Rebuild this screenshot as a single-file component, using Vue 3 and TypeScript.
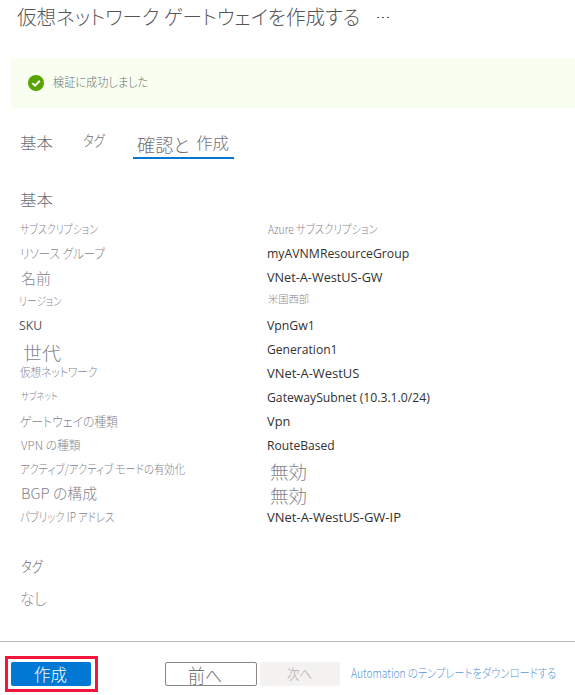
<script setup lang="ts">
import type { Directive } from 'vue'

interface Label {
  text: string
  width: number
  size: number
  dx?: number
  dy?: number
  latin?: boolean
}

interface Row {
  name: Label
  value: Label
}

// Stretches or condenses a label horizontally to its intended width.
const vFit: Directive<HTMLElement, Label> = {
  mounted(el, { value }) {
    const scale = value.width / el.offsetWidth
    el.style.transform = `translate(${value.dx ?? 0}px, ${value.dy ?? 0}px) scaleX(${scale})`
  },
}

const t = (text: string, width: number, size: number, dx = 0, dy = 0): Label => ({ text, width, size, dx, dy })
const en = (text: string, width: number, dx = -1): Label => ({ text, width, size: 12.8, dx, dy: -1, latin: true })

const title = t('仮想ネットワーク ゲートウェイを作成する', 343, 20, -1, -1)
const status = t('検証に成功しました', 95, 12, 0, -1)
const tabBasic = t('基本', 33, 16, 0, -1)
const tabTag = t('タグ', 22, 15, 0, -3)
const tabReview = t('確認と', 52, 18.5, 0, 1)
const tabCreate = t('作成', 33, 16, 0, -1)
const heading = t('基本', 33, 16, 0, -1)

const rows: Row[] = [
  { name: t('サブスクリプション', 78, 12, -1, -1), value: t('Azure サブスクリプション', 110, 12, 0, -1) },
  { name: t('リソース グループ', 85, 13, -1, -1), value: en('myAVNMResourceGroup', 142) },
  { name: t('名前', 30, 14.5, 0, 0), value: en('VNet-A-WestUS-GW', 116) },
  { name: t('リージョン', 43, 12, -2, -1), value: t('米国西部', 41, 10.5, 0, -3) },
  { name: en('SKU', 23, -2), value: en('VpnGw1', 48) },
  { name: t('世代', 38, 18.5, 2, 2), value: en('Generation1', 71) },
  { name: t('仮想ネットワーク', 77, 12, -1, -2), value: en('VNet-A-WestUS', 92) },
  { name: t('サブネット', 37, 10.5, 0, -2), value: en('GatewaySubnet (10.3.1.0/24)', 163) },
  { name: t('ゲートウェイの種類', 98, 13, -1, -1), value: en('Vpn', 23) },
  { name: t('VPN の種類', 60, 12, 0, -1), value: en('RouteBased', 68) },
  { name: t('アクティブ/アクティブ モードの有効化', 165, 12.5, -1, -1), value: t('無効', 37, 18.5, 2, 1) },
  { name: t('BGP の構成', 76, 14.5, 0, -1), value: t('無効', 37, 18.5, 2, 1) },
  { name: t('パブリック IP アドレス', 94, 12.5, -1, -1), value: en('VNet-A-WestUS-GW-IP', 134) },
]

const tagHeading = t('タグ', 22, 15)
const tagNone = t('なし', 26, 15.5, -1, 0)
const create = t('作成', 33, 17)
const previous = t('前へ', 34, 19, 0, 1)
const next = t('次へ', 25, 13.5, 0, -1)
const download = t('Automation のテンプレートをダウンロードする', 205, 12.5, 0, -1)
</script>

<template>
  <main class="page">
    <header class="title">
      <h1><span v-fit="title" class="label" :style="{ fontSize: title.size + 'px' }">{{ title.text }}</span></h1>
      <svg class="more" width="13" height="4" viewBox="0 0 13 4">
        <path d="M0 1h2v1H0zM5 1h2v1H5zM10 1h2v1h-2z" fill="#555" />
      </svg>
    </header>

    <section class="status">
      <svg width="16" height="16" viewBox="0 0 16 16">
        <circle cx="8" cy="8" r="8" fill="#57a300" />
        <path d="M4.3 8.1 7 10.7l4.8-5" fill="none" stroke="#fff" stroke-width="2" />
      </svg>
      <span v-fit="status" class="label" :style="{ fontSize: status.size + 'px' }">{{ status.text }}</span>
    </section>

    <nav class="tabs">
      <a class="tab basic"><span v-fit="tabBasic" class="label" :style="{ fontSize: tabBasic.size + 'px' }">{{ tabBasic.text }}</span></a>
      <a class="tab tag"><span v-fit="tabTag" class="label" :style="{ fontSize: tabTag.size + 'px' }">{{ tabTag.text }}</span></a>
      <a class="tab active">
        <span class="word"><span v-fit="tabReview" class="label" :style="{ fontSize: tabReview.size + 'px' }">{{ tabReview.text }}</span></span>
        <span class="word"><span v-fit="tabCreate" class="label" :style="{ fontSize: tabCreate.size + 'px' }">{{ tabCreate.text }}</span></span>
      </a>
    </nav>

    <h2><span v-fit="heading" class="label" :style="{ fontSize: heading.size + 'px' }">{{ heading.text }}</span></h2>

    <dl class="details">
      <template v-for="row in rows" :key="row.name.text">
        <dt><span v-fit="row.name" class="label" :class="{ latin: row.name.latin }" :style="{ fontSize: row.name.size + 'px' }">{{ row.name.text }}</span></dt>
        <dd><span v-fit="row.value" class="label" :class="{ latin: row.value.latin }" :style="{ fontSize: row.value.size + 'px' }">{{ row.value.text }}</span></dd>
      </template>
    </dl>

    <section class="tags">
      <h3><span v-fit="tagHeading" class="label" :style="{ fontSize: tagHeading.size + 'px' }">{{ tagHeading.text }}</span></h3>
      <p><span v-fit="tagNone" class="label" :style="{ fontSize: tagNone.size + 'px' }">{{ tagNone.text }}</span></p>
    </section>

    <footer class="actions">
      <div class="highlight">
        <button class="create"><span v-fit="create" class="label" :style="{ fontSize: create.size + 'px' }">{{ create.text }}</span></button>
      </div>
      <button class="previous"><span v-fit="previous" class="label" :style="{ fontSize: previous.size + 'px' }">{{ previous.text }}</span></button>
      <button class="next" disabled><span v-fit="next" class="label" :style="{ fontSize: next.size + 'px' }">{{ next.text }}</span></button>
      <a class="download"><span v-fit="download" class="label" :style="{ fontSize: download.size + 'px' }">{{ download.text }}</span></a>
    </footer>
  </main>
</template>

<style>
body {
  margin: 0;
  background: #fff;
}
</style>

<style scoped>
.page {
  box-sizing: border-box;
  width: 575px;
  height: 695px;
  overflow: hidden;
  display: flex;
  flex-direction: column;
  color: #6f6f74;
  font-family: "Noto Sans CJK JP", sans-serif;
  font-weight: 300;
}
.label {
  display: inline-block;
  flex: none;
  line-height: 24px;
  white-space: nowrap;
  font-feature-settings: "palt";
  transform-origin: left center;
}
.latin {
  font-family: "Open Sans", "Noto Sans", sans-serif;
  font-weight: 400;
  color: #323130;
}
h1, h2, h3, p, dl, dt, dd {
  margin: 0;
  font-weight: inherit;
}
.title {
  display: flex;
  align-items: center;
  height: 36px;
  padding-left: 18px;
  color: #555;
}
.title h1 {
  display: flex;
  width: 359px;
}
.status {
  display: flex;
  align-items: center;
  gap: 9px;
  height: 50px;
  margin: 22px 0 0 11px;
  padding-left: 17px;
  background: #f8fff0;
}
.tabs {
  display: flex;
  height: 28px;
  margin: 23px 0 0 20px;
}
.tab {
  display: flex;
}
.basic {
  width: 63px;
}
.tag {
  width: 50px;
}
.active {
  box-sizing: border-box;
  width: 101px;
  gap: 8px;
  padding-left: 4px;
  border-bottom: 2px solid #0078d4;
}
.word {
  flex: none;
  width: 51px;
}
h2 {
  display: flex;
  height: 24px;
  margin: 29px 0 0 20px;
}
.details {
  display: grid;
  grid-template-columns: 247px 1fr;
  grid-auto-rows: 24px;
  margin: 6px 0 0 21px;
  color: #84858e;
}
dt, dd {
  display: flex;
}
dt .latin {
  color: #555;
}
.tags {
  display: grid;
  grid-template-rows: 32px 30px;
  margin: 24px 0 0 21px;
}
.tags h3,
.tags p {
  display: flex;
}
.tags p {
  color: #8b8e96;
}
.actions {
  display: flex;
  align-items: center;
  box-sizing: border-box;
  height: 54px;
  margin-top: auto;
  padding: 12px 0 1px 5px;
  border-top: 1px solid #b8b8b8;
}
.actions > * {
  flex: none;
}
.highlight {
  box-sizing: border-box;
  width: 93px;
  height: 36px;
  padding: 3px;
  border: 3px solid #f2163a;
}
button {
  display: flex;
  align-items: center;
  box-sizing: border-box;
  height: 24px;
  padding: 0;
  border: 0;
  border-radius: 2px;
  background: none;
  font: inherit;
  color: inherit;
}
.create {
  width: 80px;
  padding-left: 23px;
  background: #0078d4;
  color: #fff;
}
.previous {
  width: 92px;
  margin-left: 67px;
  padding-left: 22px;
  border: 1px solid #888;
}
.next {
  width: 80px;
  margin-left: 3px;
  padding-left: 27px;
  background: #f3f2f1;
  color: #aaa;
}
.download {
  display: flex;
  width: 210px;
  margin-left: 11px;
  color: #5b98d5;
}
</style>
